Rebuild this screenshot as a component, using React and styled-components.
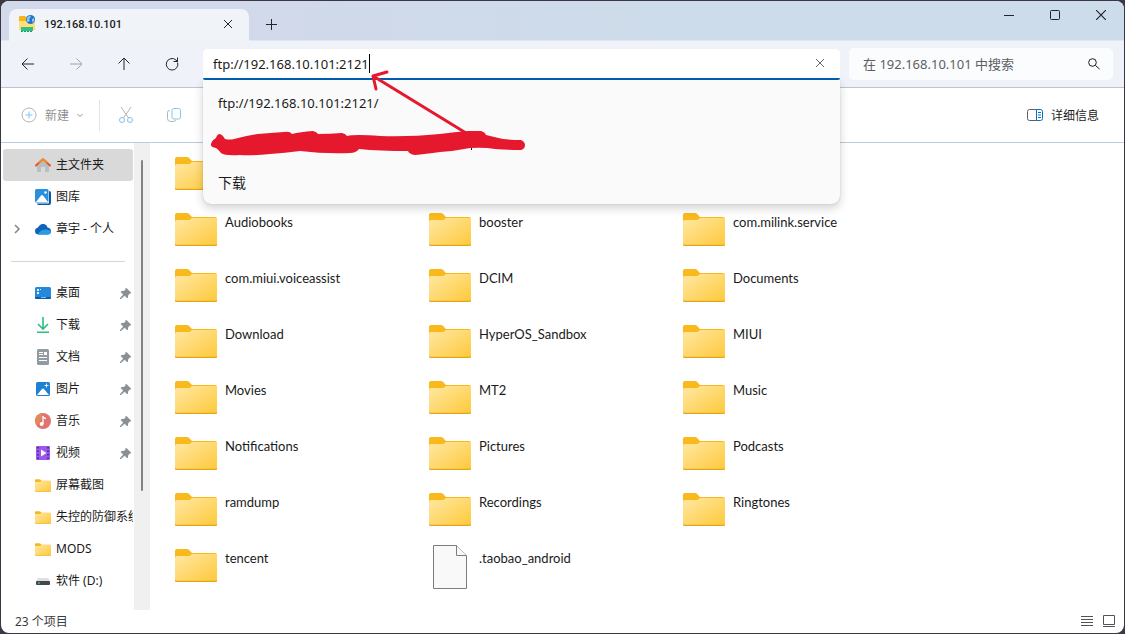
import React, { useState } from 'react';
import styled, { createGlobalStyle } from 'styled-components';

const GlobalStyle = createGlobalStyle`
  * {
    box-sizing: border-box;
  }
  body {
    margin: 0;
    background: #3c3745;
    color: #1a1a1a;
    font-family: "Noto Sans", "Noto Sans CJK SC", sans-serif;
    font-size: 12px;
  }
  button, input {
    font: inherit;
    color: inherit;
    border: 0;
    padding: 0;
    background: none;
    outline: none;
  }
  svg {
    display: block;
    flex: none;
  }
  ul {
    list-style: none;
    margin: 0;
    padding: 0;
  }
`;

const Line = ({ size = 16, width = 1, children, ...rest }) => (
	<svg width={size} height={size} viewBox={`0 0 ${size} ${size}`} fill="none" stroke="currentColor" strokeWidth={width} {...rest}>
		{children}
	</svg>
)

const FolderShape = ({ id, width, height }) => (
	<svg width={width} height={height} viewBox="0 0 42 33">
		<defs>
			<linearGradient id={id} x1="0" y1="0" x2="1" y2="1">
				<stop offset="0" stopColor="#ffe8a3"/>
				<stop offset="1" stopColor="#fec93a"/>
			</linearGradient>
		</defs>
		<path d="M0 2Q0 0 2 0H12Q14 0 15 2L17 4H40Q42 4 42 6V12H0Z" fill="#f9b81c"/>
		<path d="M0 9Q0 7 2 7H13Q15 7 16 6L17 5H42V31Q42 33 40 33H2Q0 33 0 31Z" fill={`url(#${id})`}/>
		<path d="M0 31Q0 33 2 33H40Q42 33 42 31Q42 32 40 32H2Q0 32 0 31Z" fill="#e2a21b" stroke="#eaa91f" strokeWidth=".5"/>
	</svg>
)

const FileShape = () => (
	<svg width="34" height="44" viewBox="0 0 34 44" fill="#f9f9f9" stroke="#7d7d7d">
		<path d="M.5 .5H23.5L33.5 10.5V43.5H.5Z"/>
		<path d="M23.5 .5V10.5H33.5"/>
	</svg>
)

const FtpIcon = () => (
	<svg width="18" height="18" viewBox="0 0 18 18">
		<path d="M1 2Q1 1 2 1H7L9 3H17V15H1Z" fill="#f7b41c"/>
		<path d="M1 6H8L10 4H17V14Q17 15 16 15H2Q1 15 1 14Z" fill="#ffdf7b"/>
		<path d="M3 12H15V16H3Z" fill="#2fc086"/>
		<path d="M3 16.5H15" stroke="#1b9a68" strokeDasharray="2 1"/>
		<circle cx="12.5" cy="4.5" r="4.5" fill="#1f74c9"/>
		<path d="M9 3Q10 1 12 .5L13 2L11 4L12 6L10 7Q8 6 9 3ZM14 4L16 3Q17 5 15 8L14 6Z" fill="#8cc8f2"/>
	</svg>
)

const HomeIcon = () => (
	<svg width="16" height="16" viewBox="0 0 16 16">
		<path d="M2 8L8 3L14 8V14Q14 15 13 15H10V10H6V15H3Q2 15 2 14Z" fill="#b9bec1"/>
		<path d="M1 8.5L7.5 2.5Q8 2 8.5 2.5L15 8.5" fill="none" stroke="#e4562b" strokeWidth="2" strokeLinecap="round"/>
		<path d="M4 5.7L7.5 2.5Q8 2 8.5 2.5L12 5.7" fill="none" stroke="#ef9030" strokeWidth="2"/>
	</svg>
)

const GalleryIcon = () => (
	<svg width="16" height="16" viewBox="0 0 16 16">
		<path d="M14 2Q16 2 16 4V14Q16 16 14 16H4Q2 16 2 14.5H13Q14 14.5 14 13Z" fill="#0b57a6"/>
		<rect width="13.5" height="13.5" rx="1.5" fill="#2a8fdc"/>
		<path d="M1 13L6 6.5Q7 5.5 8 6.5L13 13Z" fill="#fff"/>
		<circle cx="10.5" cy="3.5" r="1.2" fill="#fff"/>
	</svg>
)

const CloudIcon = () => (
	<svg width="16" height="16" viewBox="0 0 16 16">
		<path d="M4 13.5Q0 13.5 0 10Q0 7 3 6.5Q5 2.5 8.5 3Q11.500 3 12.5 6.5Q16 7 16 10Q16 13.5 12.5 13.5Z" fill="#0f63b9"/>
		<path d="M3 13.2Q5 9 10 8.5Q13 8 16 10Q16 13.5 12.5 13.5H4Z" fill="#299ae4"/>
	</svg>
)

const DesktopIcon = () => (
	<svg width="16" height="16" viewBox="0 0 16 16">
		<rect y="2" width="16" height="12" rx="1.5" fill="#2489da"/>
		<path d="M0 12H16V12.5Q16 14 14.5 14H1.5Q0 14 0 12.5Z" fill="#0a5ba9"/>
		<path d="M2 4H4V6H2ZM5 4H6V5H5ZM2 7H4V9H2Z" fill="#e4f4ff"/>
		<path d="M6 12.5H11" stroke="#69c8ff"/>
	</svg>
)

const DownloadIcon = () => (
	<svg width="16" height="16" viewBox="0 0 16 16" fill="none" stroke="#2ebd85" strokeWidth="1.6">
		<path d="M8 0V12M3 7L8 12L13 7M2 15.2H14"/>
	</svg>
)

const DocumentIcon = () => (
	<svg width="16" height="16" viewBox="0 0 16 16">
		<rect x="2" width="12" height="16" rx="1.5" fill="#929ba2"/>
		<path d="M4 3.5H8M4 5.5H8M4 8.5H12M4 11.5H12" stroke="#fff"/>
		<rect x="9" y="3" width="3" height="3" fill="#fff"/>
	</svg>
)

const PictureIcon = () => (
	<svg width="16" height="16" viewBox="0 0 16 16">
		<rect x="1" y="1" width="14" height="14" rx="1.5" fill="#1f80d3"/>
		<path d="M2 14L7 8Q8 7 9 8L14 14Z" fill="#fff"/>
		<path d="M11.5 2.5V6.5M9.5 4.5H13.5" stroke="#e0f3ff"/>
	</svg>
)

const MusicIcon = () => (
	<svg width="16" height="16" viewBox="0 0 16 16">
		<circle cx="8" cy="8" r="8" fill="#e0736d"/>
		<path d="M0 8A8 8 0 0 1 8 0L7 4L3 12Q0 11 0 8Z" fill="#e28a5d"/>
		<path d="M8 3V11M8 3.5Q9 5.5 11 5.5" stroke="#fff" strokeWidth="1.3" fill="none"/>
		<circle cx="6.6" cy="11" r="2" fill="#fff"/>
	</svg>
)

const VideoIcon = () => (
	<svg width="16" height="16" viewBox="0 0 16 16">
		<rect x="1" y="1" width="14" height="14" rx="1" fill="#9a57ee"/>
		<path d="M3 2V14M13 2V14" stroke="#43207a" strokeWidth="1.5" strokeDasharray="1.5 2"/>
		<path d="M6 4.5L11.5 8L6 11.5Z" fill="#fff"/>
	</svg>
)

const DriveIcon = () => (
	<svg width="16" height="16" viewBox="0 0 16 16">
		<path d="M3 5H13L15 8H1Z" fill="#dddfe1"/>
		<rect x="1" y="8" width="14" height="4" rx="1" fill="#44474d"/>
		<path d="M3 10H5" stroke="#55df98"/>
	</svg>
)

const PinIcon = () => (
	<svg width="11" height="11" viewBox="0 0 12 12" fill="#8b9097">
		<path d="M7 0L12 5V6L10.5 6L9 8L8.5 11H7.5L5 8.5L1 12H0V11L3.5 7L1 4.5V3.500L4.5 3L6 1.5V0Z"/>
	</svg>
)

const ScissorsIcon = () => (
	<svg width="16" height="16" viewBox="0 0 16 16" fill="none">
		<path d="M3 0L10.5 11M13 0L5.5 11" stroke="#b4b4b4"/>
		<circle cx="4" cy="13" r="2.5" stroke="#84bfe9"/>
		<circle cx="12" cy="13" r="2.5" stroke="#84bfe9"/>
	</svg>
)

const CopyIcon = () => (
	<svg width="16" height="16" viewBox="0 0 16 16" fill="none">
		<path d="M4 3.5H3.5Q1.5 3.5 1.5 5.5V11.5Q1.5 14.5 4.5 14.5H7.5Q9.5 14.5 9.5 13" stroke="#b4b4b4"/>
		<rect x="6" y="1.5" width="8.5" height="10.5" rx="2" stroke="#7fc6f3"/>
	</svg>
)

const DetailsIcon = () => (
	<svg width="16" height="12" viewBox="0 0 16 12" fill="none">
		<path d="M9.5 .5H2.5Q.5 .5 .5 2.5V9.5Q.5 11.5 2.5 11.5H9.5" stroke="#56606a"/>
		<path d="M9.5 .5H13.5Q15.5 .5 15.5 2.5V9.5Q15.5 11.5 13.5 11.5H9.5Z" stroke="#0b6ebd"/>
		<path d="M11 3.5H14M11 6H14M11 8.5H14" stroke="#0b6ebd"/>
	</svg>
)

const pinned = [
	{ label: '桌面', icon: <DesktopIcon/>, pin: true },
	{ label: '下载', icon: <DownloadIcon/>, pin: true },
	{ label: '文档', icon: <DocumentIcon/>, pin: true },
	{ label: '图片', icon: <PictureIcon/>, pin: true },
	{ label: '音乐', icon: <MusicIcon/>, pin: true },
	{ label: '视频', icon: <VideoIcon/>, pin: true },
	{ label: '屏幕截图', icon: <FolderShape id="side1" width={16} height={13}/> },
	{ label: '失控的防御系统', icon: <FolderShape id="side2" width={16} height={13}/> },
	{ label: 'MODS', icon: <FolderShape id="side3" width={16} height={13}/> },
	{ label: '软件 (D:)', icon: <DriveIcon/> },
]

const home = [
	{ label: '主文件夹', icon: <HomeIcon/>, active: true },
	{ label: '图库', icon: <GalleryIcon/> },
	{ label: '章宇 - 个人', icon: <CloudIcon/>, expandable: true },
]

const files = [
	'', '', '',
	'Audiobooks', 'booster', 'com.milink.service',
	'com.miui.voiceassist', 'DCIM', 'Documents',
	'Download', 'HyperOS_Sandbox', 'MIUI',
	'Movies', 'MT2', 'Music',
	'Notifications', 'Pictures', 'Podcasts',
	'ramdump', 'Recordings', 'Ringtones',
	'tencent', '.taobao_android',
]

const SideItem = ({ label, icon, pin, active, expandable }) => (
	<li>
		<SideLink href="#" $active={active}>
			<Expander>
				{expandable && <Line size={10} width={1.5} stroke="#858585"><path d="M3 1L7 5L3 9"/></Line>}
			</Expander>
			<SideIcon>{icon}</SideIcon>
			<SideLabel>{label}</SideLabel>
			{pin && <PinIcon/>}
		</SideLink>
	</li>
)

const App = () => {
	const [address, setAddress] = useState('ftp://192.168.10.101:2121')
	const [query, setQuery] = useState('')

	return (
		<>
			<GlobalStyle/>
			<Window>
				<TitleBar>
					<Tab>
						<FtpIcon/>
						<TabTitle>192.168.10.101</TabTitle>
						<IconButton $size={24} aria-label="关闭标签页">
							<Line size={10}><path d="M1 1L9 9M9 1L1 9"/></Line>
						</IconButton>
					</Tab>
					<IconButton $size={44} $height={31} aria-label="新标签页">
						<Line size={11}><path d="M5.5 0V11M0 5.5H11"/></Line>
					</IconButton>
					<WindowControls>
						<IconButton $size={46} $height={28} aria-label="最小化">
							<Line size={10}><path d="M0 5.5H10"/></Line>
						</IconButton>
						<IconButton $size={46} $height={28} aria-label="最大化">
							<Line size={10}><rect x=".5" y=".5" width="9" height="9" rx="1"/></Line>
						</IconButton>
						<IconButton $size={46} $height={28} aria-label="关闭">
							<Line size={10} width={1.2}><path d="M0 0L10 10M10 0L0 10"/></Line>
						</IconButton>
					</WindowControls>
				</TitleBar>

				<NavBar>
					<NavButtons>
						<IconButton $size={48} aria-label="后退">
							<Line><path d="M14 8H2M7.5 2.5L2 8L7.5 13.5"/></Line>
						</IconButton>
						<IconButton $size={48} $muted aria-label="前进" disabled>
							<Line><path d="M2 8H14M8.5 2.5L14 8L8.5 13.5"/></Line>
						</IconButton>
						<IconButton $size={48} aria-label="上移">
							<Line><path d="M8 14V2M2.5 7.5L8 2L13.5 7.5"/></Line>
						</IconButton>
						<IconButton $size={48} aria-label="刷新">
							<Line><path d="M13.6 6.5A5.8 5.8 0 1 1 12 4L13.5 5.5M13.5 1.5V5.5H9.5"/></Line>
						</IconButton>
					</NavButtons>
					<AddressArea>
						<AddressBar>
							<AddressInput aria-label="地址" value={address} onChange={e => setAddress(e.target.value)}/>
							<Caret/>
							<ClearButton aria-label="清除">
								<Line size={10} stroke="#666"><path d="M1 1L9 9M9 1L1 9"/></Line>
							</ClearButton>
						</AddressBar>
						<Suggestions>
							<Suggestion>ftp://192.168.10.101:2121/</Suggestion>
							<Suggestion/>
							<Suggestion $large>下载</Suggestion>
						</Suggestions>
						<Markup width="330" height="100" viewBox="203 60 330 100">
							<path fill="#e5182d" d="M211 144Q212 140 216 138Q217 134 220 134Q223 135 225 139Q230 140 234 139Q245 136 258 134Q270 133 284 132Q290 131 292 134Q300 132 313 131Q317 132 318 134Q330 134 342 133Q346 134 347 136Q355 134 380 136Q410 137 440 134Q455 132 468 131H481Q485 132 486 135Q494 137 503 139Q512 140 521 140Q525 142 525 145Q525 149 521 150Q508 150 495 149Q484 147 470 148Q455 151 440 152Q425 154 415 155Q409 154 408 151Q380 151 359 149Q356 153 350 153Q325 154 300 151Q285 153 270 154Q250 156 240 155Q225 156 221 153Q219 150 216 148Q210 147 211 144Z"/>
							<path fill="none" stroke="#e5182d" strokeWidth="3" strokeLinecap="round" strokeLinejoin="round" d="M466 133L373 76M387 72L373 76L376 89"/>
							<path fill="#1a1a1a" d="M471 148H472V150H471Z"/>
						</Markup>
					</AddressArea>
					<SearchBox>
						<SearchInput aria-label="搜索" placeholder="在 192.168.10.101 中搜索" value={query} onChange={e => setQuery(e.target.value)}/>
						<Line size={12}><circle cx="4.5" cy="4.5" r="3.8"/><path d="M7.5 7.5L11.5 11"/></Line>
					</SearchBox>
				</NavBar>

				<Toolbar>
					<NewButton disabled>
						<svg width="16" height="16" viewBox="0 0 16 16" fill="none">
							<circle cx="8" cy="8" r="7" stroke="#b4b4b4"/>
							<path d="M8 4.5V11.5M4.5 8H11.5" stroke="#7cc6f4"/>
						</svg>
						新建
						<Line size={6}><path d="M.5 2L3 4.5L5.5 2"/></Line>
					</NewButton>
					<Separator/>
					<IconButton $size={48} aria-label="剪切" disabled><ScissorsIcon/></IconButton>
					<IconButton $size={48} aria-label="复制" disabled><CopyIcon/></IconButton>
					<DetailsButton><DetailsIcon/>详细信息</DetailsButton>
				</Toolbar>

				<Body>
					<Sidebar>
						<ul>{home.map(item => <SideItem key={item.label} {...item}/>)}</ul>
						<SideDivider/>
						<ul>{pinned.map(item => <SideItem key={item.label} {...item}/>)}</ul>
					</Sidebar>
					<ScrollTrack><ScrollThumb/></ScrollTrack>
					<FileGrid>
						{files.map((name, i) => {
							const isFile = name.startsWith('.')
							return (
								<FileItem key={i}>
									<FileIcon $file={isFile}>
										{isFile ? <FileShape/> : <FolderShape id={`f${i}`} width={42} height={33}/>}
									</FileIcon>
									{name && <FileName>{name}</FileName>}
								</FileItem>
							)
						})}
					</FileGrid>
				</Body>

				<StatusBar>
					<StatusText>23 个项目</StatusText>
					<ViewButtons>
						<IconButton $size={22} $height={20} aria-label="详细信息视图">
							<Line size={12} stroke="#55515c"><path d="M0 1.5H12M0 4.5H12M0 7.5H12M0 10.5H12"/></Line>
						</IconButton>
						<IconButton $size={22} $height={20} aria-label="大缩略图视图">
							<Line size={12} stroke="#55515c"><path d="M.5 .5H11.5V9.5H.5ZM0 11.5H12"/></Line>
						</IconButton>
					</ViewButtons>
				</StatusBar>
			</Window>
		</>
	);
};

const Window = styled.div`
  margin: 1px;
  min-height: calc(100vh - 2px);
  display: flex;
  flex-direction: column;
  background: #fff;
  border-radius: 8px;
  overflow: hidden;
`;

const TitleBar = styled.header`
  display: flex;
  align-items: flex-end;
  height: 40px;
  padding-left: 8px;
  background: linear-gradient(90deg, #d1d9ea 25%, #cddcea 60%);
  border-bottom: 1px solid #dfe7f1;
`;

const Tab = styled.div`
  display: flex;
  align-items: center;
  gap: 8px;
  width: 240px;
  height: 32px;
  margin-bottom: -1px;
  padding: 0 9px 2px;
  background: #f0f4f9;
  border-radius: 8px 8px 0 0;
`;

const TabTitle = styled.span`
  flex: 1;
  font-family: Roboto, "Noto Sans", sans-serif;
  font-size: 11px;
  font-weight: 500;
`;

const IconButton = styled.button`
  display: flex;
  align-items: center;
  justify-content: center;
  flex: none;
  width: ${p => p.$size}px;
  height: ${p => p.$height || 32}px;
  color: ${p => p.$muted ? '#a0a3a9' : '#26242b'};
`;

const WindowControls = styled.div`
  display: flex;
  align-self: flex-start;
  margin-left: auto;
`;

const NavBar = styled.nav`
  display: flex;
  align-items: center;
  height: 47px;
  padding: 0 11px 0 3px;
  background: #eff3f9;
  border-bottom: 1px solid #b9c3d2;
`;

const NavButtons = styled.div`
  display: flex;
  margin-right: 7px;
`;

const AddressArea = styled.div`
  position: relative;
  flex: 1;
  margin-right: 9px;
  font-size: 13px;
`;

const AddressBar = styled.div`
  display: flex;
  align-items: center;
  height: 31px;
  padding: 0 10px;
  background: #fff;
  border-bottom: 2px solid #0062b4;
  border-radius: 5px 5px 2px 2px;
`;

const AddressInput = styled.input`
  field-sizing: content;
  padding-top: 2px;
  line-height: 20px;
`;

const Caret = styled.span`
  width: 1px;
  height: 19px;
  background: #000;
`;

const ClearButton = styled.button`
  margin-left: auto;
  padding: 5px;
`;

const Suggestions = styled.ul`
  position: absolute;
  z-index: 1;
  top: 100%;
  left: 0;
  right: 0;
  padding: 3px 0 1px;
  background: #fafafa;
  border-radius: 0 0 8px 8px;
  box-shadow: 0 4px 10px rgba(0, 0, 0, .18), 0 0 1px rgba(0, 0, 0, .3);
`;

const Suggestion = styled.li`
  height: 40px;
  padding: 0 15px;
  line-height: 40px;
  font-size: ${p => p.$large ? 14 : 13}px;
`;

const Markup = styled.svg`
  position: absolute;
  z-index: 2;
  top: 11px;
  left: 0;
  pointer-events: none;
`;

const SearchBox = styled.div`
  display: flex;
  align-items: center;
  width: 264px;
  height: 32px;
  padding: 0 13px 0 14px;
  background: #fafcfd;
  border-radius: 5px;
`;

const SearchInput = styled.input`
  flex: 1;
  min-width: 0;
  font-size: 13px;
  line-height: 20px;
  &::placeholder {
    color: #605e66;
    opacity: 1;
  }
`;

const Toolbar = styled.div`
  display: flex;
  align-items: center;
  height: 55px;
  padding: 0 25px 0 20px;
  border-bottom: 1px solid #bccbdd;
`;

const NewButton = styled.button`
  display: flex;
  align-items: center;
  gap: 8px;
  color: #8f8f8f;
`;

const Separator = styled.span`
  width: 1px;
  height: 31px;
  margin: 0 2px 0 16px;
  background: #e4e4e4;
`;

const DetailsButton = styled.button`
  display: flex;
  align-items: center;
  gap: 8px;
  margin-left: auto;
`;

const Body = styled.div`
  display: flex;
  flex: 1;
`;

const Sidebar = styled.aside`
  width: 133px;
  padding: 6px 1px 0 2px;
`;

const SideLink = styled.a`
  display: flex;
  align-items: center;
  height: 32px;
  padding-right: 2px;
  color: inherit;
  text-decoration: none;
  border-radius: 3px;
  background: ${p => p.$active ? '#d9d9d9' : 'none'};
`;

const Expander = styled.span`
  flex: none;
  width: 32px;
  padding-left: 9px;
`;

const SideIcon = styled.span`
  flex: none;
  width: 16px;
  margin-right: 5px;
`;

const SideLabel = styled.span`
  flex: 1;
  margin-right: -2px;
  padding-bottom: 2px;
  overflow: hidden;
  white-space: nowrap;
`;

const SideDivider = styled.hr`
  margin: 16px 8px 15px;
  border: 0;
  border-top: 1px solid #d5d5d5;
`;

const ScrollTrack = styled.div`
  width: 16px;
  padding-top: 17px;
  background: #f0f0f0;
`;

const ScrollThumb = styled.div`
  width: 2px;
  height: 331px;
  margin: 0 auto;
  background: #838383;
  border-radius: 1px;
`;

const FileGrid = styled.ul`
  flex: 1;
  display: grid;
  grid-template-columns: repeat(auto-fill, 254px);
  grid-auto-rows: 56px;
  align-content: start;
  padding: 7px 0 0 22px;
`;

const FileItem = styled.li`
  display: flex;
  align-items: flex-start;
  gap: 5px;
`;

const FileIcon = styled.span`
  display: flex;
  align-items: center;
  justify-content: center;
  width: 48px;
  height: 48px;
  padding: ${p => p.$file ? '2px 0 0' : '0 0 2px'};
`;

const FileName = styled.span`
  padding-top: 8px;
  font-family: Lato, "Noto Sans", sans-serif;
  font-size: 13px;
  line-height: 16px;
`;

const StatusBar = styled.footer`
  display: flex;
  align-items: center;
  justify-content: space-between;
  height: 23px;
  padding: 0 4px 0 14px;
  color: #3a3c42;
`;

const StatusText = styled.span`
  padding-bottom: 2px;
`;

const ViewButtons = styled.div`
  display: flex;
  padding-bottom: 1px;
`;

export default App;
